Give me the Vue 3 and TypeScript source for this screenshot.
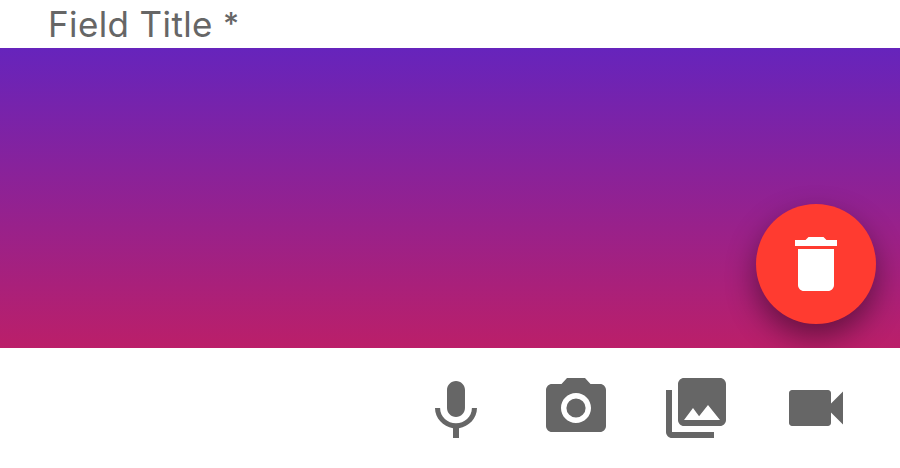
<script setup lang="ts">
interface Action {
  label: string
  path: string
}

const actions: Action[] = [
  {
    label: 'Record audio',
    path: 'M12 15c1.66 0 2.99-1.34 2.99-3L15 6c0-1.66-1.34-3-3-3S9 4.34 9 6v6c0 1.66 1.34 3 3 3zm5.3-3c0 3-2.54 5.1-5.3 5.1S6.7 15 6.7 12H5c0 3.41 2.72 6.23 6 6.72V22h2v-3.28c3.28-.48 6-3.3 6-6.72h-1.7z',
  },
  {
    label: 'Take photo',
    path: 'M12 8.8a3.2 3.2 0 1 0 0 6.4a3.2 3.2 0 1 0 0-6.4zM9 2L7.17 4H4c-1.1 0-2 .9-2 2v12c0 1.1.9 2 2 2h16c1.1 0 2-.9 2-2V6c0-1.1-.9-2-2-2h-3.17L15 2H9zm3 15c-2.76 0-5-2.24-5-5s2.24-5 5-5 5 2.24 5 5-2.24 5-5 5z',
  },
  {
    label: 'Choose from library',
    path: 'M22 16V4c0-1.1-.9-2-2-2H8c-1.1 0-2 .9-2 2v12c0 1.1.9 2 2 2h12c1.1 0 2-.9 2-2zm-11-4l2.03 2.71L16 11l4 5H8l3-4zM2 6v14c0 1.1.9 2 2 2h14v-2H4V6H2z',
  },
  {
    label: 'Record video',
    path: 'M17 10.5V7c0-.55-.45-1-1-1H4c-.55 0-1 .45-1 1v10c0 .55.45 1 1 1h12c.55 0 1-.45 1-1v-3.5l4 4v-11l-4 4z',
  },
]
</script>

<template>
  <section class="field">
    <header class="title">Field Title <span class="required">*</span></header>
    <div class="preview">
      <button class="remove" type="button" aria-label="Delete">
        <svg viewBox="0 0 24 24"><path d="M6 19c0 1.1.9 2 2 2h8c1.1 0 2-.9 2-2V7H6v12zM19 4h-3.5l-1-1h-5l-1 1H5v2h14V4z" /></svg>
      </button>
    </div>
    <footer class="toolbar">
      <button v-for="a in actions" :key="a.label" class="action" type="button" :aria-label="a.label">
        <svg viewBox="0 0 24 24"><path :d="a.path" /></svg>
      </button>
    </footer>
  </section>
</template>

<style>
body {
  margin: 0;
  background: #fff;
}
</style>

<style scoped>
.field {
  width: 900px;
  height: 468px;
  overflow: hidden;
  background: #fff;
  font-family: Inter, "Liberation Sans", sans-serif;
}
.title {
  box-sizing: border-box;
  height: 48px;
  padding-left: 48px;
  font-size: 35px;
  letter-spacing: 0.38px;
  line-height: 49px;
  color: #666;
}
.required {
  font-size: 31px;
  font-weight: 500;
  line-height: 1;
  vertical-align: 2px;
}
.preview {
  box-sizing: border-box;
  height: 300px;
  padding: 0 24px 24px 0;
  display: flex;
  justify-content: flex-end;
  align-items: flex-end;
  overflow: hidden;
  background: linear-gradient(180deg, #6624bc, #bb1f69);
}
button {
  border: 0;
  padding: 0;
  display: flex;
  align-items: center;
  justify-content: center;
}
.remove {
  width: 120px;
  height: 120px;
  border-radius: 50%;
  background: #ff3b30;
  box-shadow: 0 13px 30px rgba(0, 0, 0, 0.44);
}
svg {
  display: block;
  width: 72px;
  height: 72px;
  fill: #fff;
}
.toolbar {
  box-sizing: border-box;
  height: 120px;
  padding-right: 24px;
  display: flex;
  justify-content: flex-end;
}
.action {
  width: 120px;
  height: 120px;
  background: none;
}
.action svg {
  fill: #666;
}
</style>
